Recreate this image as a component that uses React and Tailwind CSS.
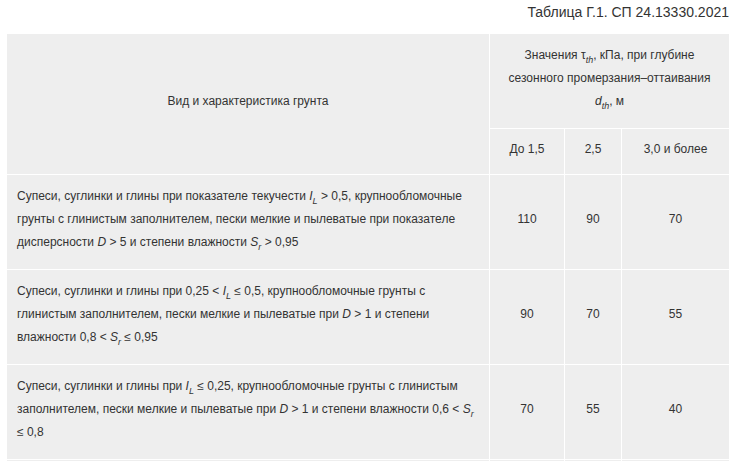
export default function App() {
  const sub = (t) => <sub className="italic text-[9px] bottom-[-4px]">{t}</sub>;
  const cell = "border border-white px-[10px] pt-0 pb-[5px]";
  const num = `${cell} text-center`;
  return (
    <div className="w-[733px] h-[461px] overflow-hidden bg-white text-[#333] font-['Liberation_Sans',Arial,sans-serif]">
      <div className="text-right text-[14px] leading-5 pt-[2px] pr-[4px] h-[33px]">Таблица Г.1. СП 24.13330.2021</div>
      <table className="ml-[6px] w-[723px] table-fixed border-collapse bg-[#eeeeee] text-[12px] leading-[23px]">
        <colgroup>
          <col className="w-[483px]" />
          <col className="w-[75px]" />
          <col className="w-[57px]" />
          <col className="w-[108px]" />
        </colgroup>
        <tbody>
          <tr className="h-[95px]">
            <td rowSpan={2} className={`${cell} text-center`}>Вид и характеристика грунта</td>
            <td colSpan={3} className={`${cell} text-center`}>
              Значения τ{sub("th")}, кПа, при глубине сезонного промерзания–оттаивания <i>d</i>{sub("th")}, м
            </td>
          </tr>
          <tr className="h-[46px]">
            <td className={num}>До 1,5</td>
            <td className={num}>2,5</td>
            <td className={num}>3,0 и более</td>
          </tr>
          <tr className="h-[95px]">
            <td className={cell}>
              Супеси, суглинки и глины при показателе текучести <i>I</i>{sub("L")} &gt; 0,5, крупнообломочные грунты с глинистым заполнителем, пески мелкие и пылеватые при показателе дисперсности <i>D</i> &gt; 5 и степени влажности <i>S</i>{sub("r")} &gt; 0,95
            </td>
            <td className={num}>110</td>
            <td className={num}>90</td>
            <td className={num}>70</td>
          </tr>
          <tr className="h-[95px]">
            <td className={cell}>
              Супеси, суглинки и глины при 0,25 &lt; <i>I</i>{sub("L")} ≤ 0,5, крупнообломочные грунты с глинистым заполнителем, пески мелкие и пылеватые при <i>D</i> &gt; 1 и степени влажности 0,8 &lt; <i>S</i>{sub("r")} ≤ 0,95
            </td>
            <td className={num}>90</td>
            <td className={num}>70</td>
            <td className={num}>55</td>
          </tr>
          <tr className="h-[95px]">
            <td className={cell}>
              Супеси, суглинки и глины при <i>I</i>{sub("L")} ≤ 0,25, крупнообломочные грунты с глинистым заполнителем, пески мелкие и пылеватые при <i>D</i> &gt; 1 и степени влажности 0,6 &lt; <i>S</i>{sub("r")} ≤ 0,8
            </td>
            <td className={num}>70</td>
            <td className={num}>55</td>
            <td className={num}>40</td>
          </tr>
          <tr className="h-[95px]">
            <td className={cell}></td>
            <td className={num}></td>
            <td className={num}></td>
            <td className={num}></td>
          </tr>
        </tbody>
      </table>
    </div>
  );
}
